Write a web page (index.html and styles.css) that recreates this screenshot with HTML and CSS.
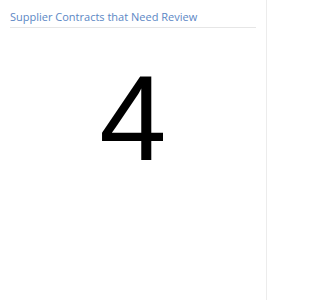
FILE: index.html
```html
<!DOCTYPE html>
<html>
<head>
<meta charset="utf-8">
<link rel="stylesheet" href="styles.css">
</head>
<body>
<div class="panel">
  <div class="title">Supplier Contracts that Need Review</div>
  <div class="value">4</div>
</div>
</body>
</html>
```
FILE: styles.css
```css
html, body {
  margin: 0;
  padding: 0;
  background: #fff;
}
.panel {
  width: 267px;
  height: 300px;
  box-sizing: border-box;
  border-right: 1px solid #ececec;
  padding: 8px 10px 0 10px;
  font-family: "Open Sans", sans-serif;
}
.title {
  color: #5b87c5;
  font-size: 11px;
  line-height: 17px;
  padding-bottom: 2px;
  border-bottom: 1px solid #e6e6e6;
}
.value {
  text-align: center;
  font-family: "Liberation Sans", Arial, sans-serif;
  font-size: 121px;
  font-weight: 400;
  line-height: 1;
  color: #000;
  margin-top: 30px;
}
```
